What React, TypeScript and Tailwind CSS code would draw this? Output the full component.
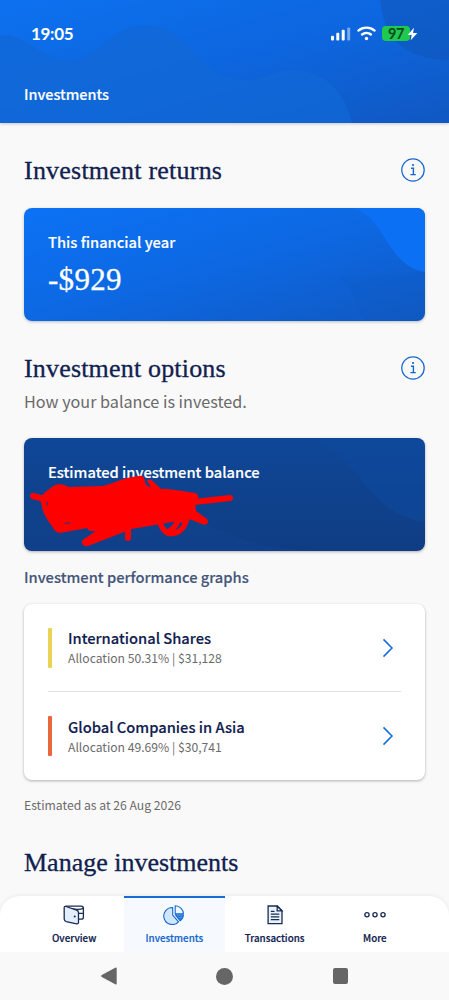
import { ReactNode } from 'react'
import clsx from 'clsx'

const options = [
  { name: 'International Shares', allocation: '50.31%', amount: '$31,128', bar: 'bg-[#ebd154]' },
  { name: 'Global Companies in Asia', allocation: '49.69%', amount: '$30,741', bar: 'bg-[#e8683c]' },
]

function InfoIcon() {
  return (
    <svg width="24" height="24" viewBox="0 0 24 24" fill="none" stroke="#1767cf" strokeWidth="1.25">
      <circle cx="12" cy="12" r="11.2" />
      <path d="M10 10.2h2.4v6M9.4 16.6h5.4" strokeWidth="1.4" />
      <circle cx="12" cy="7" r="1.1" fill="#1767cf" stroke="none" />
    </svg>
  )
}

function Chevron() {
  return (
    <svg width="12" height="20" viewBox="0 0 12 20" fill="none" stroke="#1a6fe0" strokeWidth="1.6">
      <path d="M1.5 1.4 10 10l-8.5 8.6" />
    </svg>
  )
}

function WalletIcon() {
  return (
    <svg width="22" height="20" viewBox="0 0 22 20" fill="none" stroke="#1b2b54" strokeWidth="1.3" strokeLinejoin="round">
      <path d="M2.6 1.2h15.6q2.2 0 2.2 2.2v8.6q0 2.2-2 2.2h-2.8" fill="#fff" />
      <path d="M8.5 3.6q7.5 1.6 11.9-.2M15.5 8.3h4.9" />
      <path d="M1.2 2.6q0-1.7 1.8-1.1l10.6 3.7q1.9.6 1.9 2.3v9.7q0 2-1.9 1.6L3.3 16.6q-2.1-.6-2.1-2.6z" fill="#e3eefb" />
      <circle cx="11.7" cy="11.5" r="1" fill="#1b2b54" stroke="none" />
    </svg>
  )
}

function PieIcon() {
  return (
    <svg width="22" height="20" viewBox="0 0 22 20" fill="none" stroke="#1767cf" strokeWidth="1.1" strokeLinejoin="round">
      <path d="M9.7 2.5v7.7l5.8 6.6A8.5 8.5 0 1 1 9.7 2.5z" fill="#cfe6fb" />
      <path d="M12.2.7a8.3 8.3 0 0 1 8.2 8.1h-8.2z" fill="#eef7ff" />
      <path d="M12.4 9.8h8q0 3.5-3.2 6z" fill="#4f9ae8" />
      <path d="M14.5 11.6h5M16 13.5h2.5" strokeWidth=".8" />
    </svg>
  )
}

function DocumentIcon() {
  return (
    <svg width="22" height="20" viewBox="0 0 22 20" fill="none" stroke="#1b2b54" strokeWidth="1.3">
      <path d="M4.1 1h9.2L18 5.7v12.9H4.1z" fill="#e9f3fe" />
      <path d="M13.2 1.2v4.6h4.6z" fill="#fff" />
      <path d="M6.8 6.3h3.7M6.8 9.1h8.5M6.8 11.9h8.5M6.8 14.7h8.5" />
    </svg>
  )
}

function MoreIcon() {
  return (
    <svg width="22" height="20" viewBox="0 0 22 20" fill="none" stroke="#1b2b54" strokeWidth="1.35">
      <circle cx="3" cy="9.7" r="2.1" />
      <circle cx="11" cy="9.7" r="2.1" />
      <circle cx="19" cy="9.7" r="2.1" />
    </svg>
  )
}

const tabs: { label: string; icon: ReactNode; active?: boolean }[] = [
  { label: 'Overview', icon: <WalletIcon /> },
  { label: 'Investments', icon: <PieIcon />, active: true },
  { label: 'Transactions', icon: <DocumentIcon /> },
  { label: 'More', icon: <MoreIcon /> },
]

function StatusBar() {
  return (
    <div className="flex h-[67px] items-center justify-between px-[31px] text-white">
      <span className="font-['Lato'] text-[17px] font-bold leading-none tracking-[-0.3px]">19:05</span>
      <div className="flex items-center gap-[6px]">
        <svg width="21" height="14" viewBox="0 0 21 14" fill="#fff">
          <rect x="1" y="8.7" width="3" height="4.8" rx="1" />
          <rect x="6.3" y="5.8" width="3" height="7.7" rx="1" />
          <rect x="11.7" y="2.8" width="3" height="10.7" rx="1" />
          <rect x="17.2" y=".5" width="3" height="13" rx="1" opacity=".45" />
        </svg>
        <svg width="19" height="15" viewBox="0 0 19 15" fill="none" stroke="#fff" strokeWidth="2.3" strokeLinecap="round">
          <path d="M1.4 4.6a12.3 12.3 0 0 1 16.2 0" />
          <path d="M5 8.5a7.2 7.2 0 0 1 9 0" />
          <circle cx="9.5" cy="12.5" r="1.7" fill="#fff" stroke="none" />
        </svg>
        <div className="flex items-center">
          <div className="flex h-[15px] w-[28px] items-center justify-center rounded-[4px] bg-[#1fc94f] pt-px font-['Lato'] text-[14.5px] font-bold leading-none tracking-[-0.3px] text-[#0c4a1e]">97</div>
          <svg className="-ml-[3px]" width="11" height="14" viewBox="0 0 11 14" fill="#fff">
            <path d="M6.9.8.7 8h4l-1 5.3L10.4 6H6.1z" />
          </svg>
        </div>
      </div>
    </div>
  )
}

function SectionTitle({ children, className }: { children: ReactNode; className?: string }) {
  return (
    <h2 className={clsx("whitespace-nowrap pt-px font-['Liberation_Serif',serif] text-[26px] leading-[31px] text-[#10204f] [-webkit-text-stroke:0.3px]", className)}>
      {children}
    </h2>
  )
}

export default function App() {
  return (
    <div className="flex h-[1000px] w-full flex-col overflow-hidden bg-[#f9f9f9] font-['Noto_Sans_CJK_SC',sans-serif] text-[#10204f]">

      {/* Header */}
      <header className="relative h-[123px] shrink-0 bg-linear-to-br from-[#0d71ef] via-[#0d66df] to-[#1058c2] shadow-[0_1px_3px_rgba(0,0,0,0.2)]">
        <svg className="absolute inset-0" width="449" height="123" viewBox="0 0 449 123">
          <path d="M0 36C28 32 38 60 68 60 98 60 112 25 146 25 188 25 198 80 246 80 264 80 274 70 294 70 330 72 345 96 352 123H0z" fill="#1268d6" opacity=".75" />
          <path d="M380 0C384 28 392 58 449 60V0z" fill="#0f56ba" opacity=".6" />
        </svg>
        <div className="relative">
          <StatusBar />
          <h1 className="flex h-[55px] items-center px-6 text-[14.45px] font-medium leading-none text-white [-webkit-text-stroke:0.15px]">Investments</h1>
        </div>
      </header>

      <main className="min-h-0 flex-1 px-6 pt-[31px]">
        <div className="flex items-center justify-between">
          <SectionTitle className="tracking-[0.22px]">Investment returns</SectionTitle>
          <InfoIcon />
        </div>

        {/* Returns card */}
        <div className="relative mt-[22px] h-[113px] overflow-hidden rounded-lg bg-linear-to-br from-[#0c72f5] via-[#0d68e2] to-[#1059c2] shadow-[0_1px_3px_rgba(0,0,0,0.25)]">
          <svg className="absolute inset-0" width="401" height="113" viewBox="0 0 401 113">
            <path d="M328 0C362 8 362 58 401 64V0z" fill="#0b70f3" />
            <path d="M314 70C330 80 332 100 342 113H401V64Z" fill="#1057bf" opacity=".15" />
          </svg>
          <div className="relative px-6 pt-[23px] text-white">
            <div className="text-[14.7px] font-medium leading-[22px] [-webkit-text-stroke:0.15px]">This financial year</div>
            <div className="mt-[9px] font-['Liberation_Serif',serif] text-[31px] leading-9 tracking-[0.3px] [-webkit-text-stroke:0.3px]">-$929</div>
          </div>
        </div>

        <div className="mt-[31px] flex items-center justify-between">
          <SectionTitle className="tracking-[0.18px]">Investment options</SectionTitle>
          <InfoIcon />
        </div>
        <p className="mt-[5px] text-[16.2px] leading-6 text-[#6a6a6a]">How your balance is invested.</p>

        {/* Balance card */}
        <div className="relative mt-[25px] h-[113px] rounded-lg bg-linear-to-b from-[#0f4798] to-[#0f3d83] shadow-[0_1px_3px_rgba(0,0,0,0.3)]">
          <svg className="absolute inset-0 rounded-lg" width="401" height="113" viewBox="0 0 401 113">
            <path d="M290 0C335 20 345 78 401 84V8Q401 0 393 0z" fill="#0e4a9f" opacity=".5" />
            <path d="M0 68C80 60 150 70 210 98Q240 110 290 113H8Q0 113 0 105z" fill="#10428d" opacity=".6" />
          </svg>
          <div className="relative px-6 pt-[23px] text-[14.7px] font-medium leading-[22px] text-white [-webkit-text-stroke:0.15px]">Estimated investment balance</div>
          <svg className="absolute left-0 top-0" width="230" height="113" viewBox="24 438 230 113" fill="none" stroke="#f00" strokeWidth="6" strokeLinecap="round" strokeLinejoin="round">
            <path fill="#f00" stroke="none" d="M41 500C42 492 49 490 52 487 57 483 64 484 68 487L102 486C110 485 124 477 139 476 143 475 145 478 145 483 147 486 149 487 151 487L147 481C149 477 152 480 161 489 167 488 173 490 176 490L195 493Q199 494 198 499L195 503 196 511 207 519C210 524 205 526 202 524L189 519 187 525 177 521 155 525 131 529 124 532 88 546C82 547 80 542 84 539L96 531Q89 532 87 528L60 533Q55 533 52 526C47 520 41 510 41 500z" />
            <path d="m33 496 15 4M194 502l36-4M128 525v13" />
            <path strokeWidth="5.5" d="M159 520c4 13 10 15 16 13 8-2 12-11 13-20M178 518c0 6-5 11-10 14" />
            <path d="M47 502v3M65 523q3 .6 5-.4" stroke="#173c80" strokeWidth="1.1" />
          </svg>
        </div>

        <h3 className="mt-[14px] text-[14.7px] font-medium leading-6 text-[#44567a] [-webkit-text-stroke:0.15px]">Investment performance graphs</h3>

        {/* Options list */}
        <div className="mt-[15px] h-[176px] rounded-lg bg-white px-6 shadow-[0_1px_3px_rgba(0,0,0,0.3)]">
          {options.map((option, i) => (
            <div key={option.name} className={clsx('flex h-[88px] items-center', i === 0 && 'border-b border-[#e2e2e2]')}>
              <div className={clsx('h-10 w-1 rounded-[1px]', option.bar)} />
              <div className="ml-4 flex-1 pb-px">
                <div className="text-[14.7px] font-medium leading-[22px] [-webkit-text-stroke:0.15px]">{option.name}</div>
                <div className="text-[12.15px] leading-[18px] text-[#6b6b6b]">Allocation {option.allocation} | {option.amount}</div>
              </div>
              <div className="mr-[7px]"><Chevron /></div>
            </div>
          ))}
        </div>

        <p className="mt-[15px] text-[12.2px] leading-5 text-[#6b6b6b]">Estimated as at 26 Aug 2026</p>
        <div className="mt-[31px]">
          <SectionTitle>Manage investments</SectionTitle>
        </div>
      </main>

      {/* Tab bar */}
      <nav className="flex h-14 shrink-0 rounded-t-[20px] bg-white px-6 shadow-[0_-1px_4px_rgba(0,0,0,0.06)]">
        {tabs.map((tab) => (
          <div
            key={tab.label}
            className={clsx(
              'flex flex-1 flex-col items-center border-t-2 pt-[7px]',
              tab.active ? 'border-[#176ad8] bg-[#f6fafe] text-[#1767cf]' : 'border-transparent'
            )}
          >
            {tab.icon}
            <span className="mt-[5px] text-[9.8px] font-medium leading-4 [-webkit-text-stroke:0.2px]">{tab.label}</span>
          </div>
        ))}
      </nav>

      {/* System navigation */}
      <div className="flex h-12 shrink-0 items-center justify-between bg-[#f9f9f9] px-[101px]">
        <svg width="16" height="18" viewBox="0 0 16 18" fill="#666">
          <path d="M14.2.7Q15.7-.1 15.7 1.6v14.8q0 1.7-1.5.9L.8 10Q-.5 9 .8 8z" />
        </svg>
        <div className="size-[17px] rounded-full bg-[#666]" />
        <div className="size-[15.5px] rounded-[2px] bg-[#666]" />
      </div>
    </div>
  )
}
